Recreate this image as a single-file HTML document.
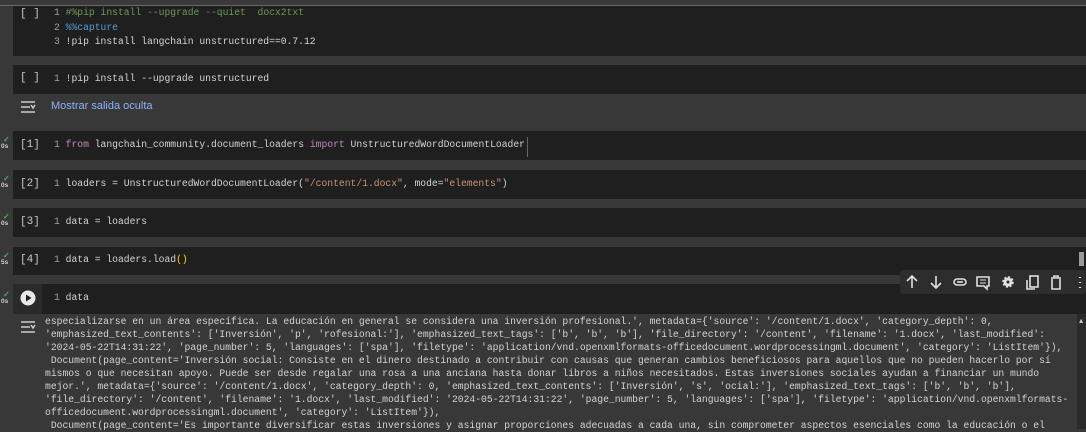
<!DOCTYPE html>
<html><head><meta charset="utf-8"><style>
body{margin:0;width:1086px;height:429px;background:#383838;overflow:hidden;position:relative;font-family:"Liberation Mono",monospace;font-size:9.7px;color:#d4d4d4}
.top{position:absolute;left:0;top:0;width:1086px;height:5px;background:#3a3a3a;border-bottom:1px solid #6a6a6a}
.cell{position:absolute;left:13px;width:1073px;background:#1f1f1f}
.ln{position:absolute;white-space:pre;line-height:12px}
.n{color:#a0a0a0}
.br{position:absolute;left:20px;color:#c8c8c8;font-size:11px;font-family:"Liberation Mono",monospace}
.g{color:#6a9955}.b{color:#569cd6}.p{color:#c586c0}.s{color:#ce9178}.y{color:#ffd700}
.chk{position:absolute;left:1px;font-family:"Liberation Sans",sans-serif;font-size:6.5px;color:#ccc;line-height:7px;font-weight:bold}
.chk i{display:block;color:#4caf50;font-style:normal;font-size:8px;padding-left:2px}
.out{position:absolute;left:45px;top:315px;width:1030px;line-height:13px;white-space:pre;color:#d4d4d4}
</style></head><body>
<div class="top"></div>
<div class="cell" style="top:6px;height:50px"></div>
<div class="br" style="top:8px">[ ]</div>
<div class="ln" style="left:54px;top:6px;line-height:14.5px"><span class="n">1</span> <span class="g">#%pip install --upgrade --quiet  docx2txt</span>
<span class="n">2</span> <span class="b">%%capture</span>
<span class="n">3</span> !pip install langchain unstructured==0.7.12</div>

<div class="cell" style="top:65px;height:29px"></div>
<div class="br" style="top:72px">[ ]</div>
<div class="ln" style="left:54px;top:73px"><span class="n">1</span> !pip install --upgrade unstructured</div>
<svg style="position:absolute;left:20px;top:100px" width="16" height="14" viewBox="0 0 16 14"><path d="M1 2h14M1 12h14M1 7h9M11 5l2 3 2-3" stroke="#ccc" stroke-width="1.5" fill="none"/></svg>
<div style="position:absolute;left:51px;top:100px;font-family:'Liberation Sans',sans-serif;font-size:11px;color:#8ab4f8">Mostrar salida oculta</div>

<div class="chk" style="top:136px"><i>✓</i>0s</div>
<div class="cell" style="top:131px;height:29px"></div>
<div class="br" style="top:139px">[1]</div>
<div class="ln" style="left:54px;top:139px"><span class="n">1</span> <span class="p">from</span> langchain_community.document_loaders <span class="p">import</span> UnstructuredWordDocumentLoader</div>
<div style="position:absolute;left:527px;top:137px;width:1px;height:20px;background:#666"></div>

<div class="chk" style="top:175px"><i>✓</i>0s</div>
<div class="cell" style="top:170px;height:29px"></div>
<div class="br" style="top:178px">[2]</div>
<div class="ln" style="left:54px;top:178px"><span class="n">1</span> loaders = UnstructuredWordDocumentLoader(<span class="s">"/content/1.docx"</span>, mode=<span class="s">"elements"</span>)</div>

<div class="chk" style="top:213px"><i>✓</i>0s</div>
<div class="cell" style="top:208px;height:29px"></div>
<div class="br" style="top:216px">[3]</div>
<div class="ln" style="left:54px;top:216px"><span class="n">1</span> data = loaders</div>

<div class="chk" style="top:252px"><i>✓</i>5s</div>
<div class="cell" style="top:247px;height:28px"></div>
<div class="br" style="top:254px">[4]</div>
<div class="ln" style="left:54px;top:254px"><span class="n">1</span> data = loaders.load<span class="y">()</span></div>
<div style="position:absolute;left:1079px;top:252px;width:5px;height:14px;background:#9a9a9a"></div>

<div class="chk" style="top:291px"><i>✓</i>0s</div>
<div class="cell" style="top:284px;height:30px"></div>
<div style="position:absolute;left:13px;top:284px;width:29px;height:30px;background:#2a2a2a"></div>
<svg style="position:absolute;left:20px;top:290px" width="16" height="16"><circle cx="8" cy="8" r="7.5" fill="#e8e8e8"/><path d="M6 4.5v7l5.5-3.5z" fill="#1f1f1f"/></svg>
<div class="ln" style="left:54px;top:292px"><span class="n">1</span> data</div>

<div style="position:absolute;left:900px;top:270px;width:186px;height:24px;background:#2d2d2d;border-radius:3px"></div>
<svg style="position:absolute;left:900px;top:270px" width="186" height="24" viewBox="0 0 186 24" fill="none" stroke="#e0e0e0" stroke-width="1.6">
<path d="M12 18V7M7 11l5-5 5 5"/><path d="M36 6v11M31 13l5 5 5-5"/>
<rect x="54" y="9" width="12" height="6" rx="3"/><path d="M57 12h6"/>
<path d="M77 7h12v9h-2v3l-3-3h-7z"/><path d="M80 10h6M80 13h6" stroke-width="1"/>
<circle cx="108" cy="12" r="4.5" fill="#e0e0e0" stroke-width="2.5" stroke-dasharray="2 1.5"/><circle cx="108" cy="12" r="1.5" fill="#2d2d2d" stroke="none"/>
<rect x="130" y="6" width="8" height="11"/><path d="M127 10v9h8"/>
<path d="M151 8h10M154 8V6h4v2M152 9v10h8V9"/>
<path d="M180 7v1M180 12v1M180 17v1" stroke-width="2.2"/>
</svg>

<svg style="position:absolute;left:20px;top:320px" width="16" height="14" viewBox="0 0 16 14"><path d="M1 2h14M1 12h14M1 7h9M11 5l2 3 2-3" stroke="#ccc" stroke-width="1.5" fill="none"/></svg>
<div class="out">especializarse en un área específica. La educación en general se considera una inversión profesional.', metadata={'source': '/content/1.docx', 'category_depth': 0,
'emphasized_text_contents': ['Inversión', 'p', 'rofesional:'], 'emphasized_text_tags': ['b', 'b', 'b'], 'file_directory': '/content', 'filename': '1.docx', 'last_modified':
'2024-05-22T14:31:22', 'page_number': 5, 'languages': ['spa'], 'filetype': 'application/vnd.openxmlformats-officedocument.wordprocessingml.document', 'category': 'ListItem'}),
 Document(page_content='Inversión social: Consiste en el dinero destinado a contribuir con causas que generan cambios beneficiosos para aquellos que no pueden hacerlo por sí
mismos o que necesitan apoyo. Puede ser desde regalar una rosa a una anciana hasta donar libros a niños necesitados. Estas inversiones sociales ayudan a financiar un mundo
mejor.', metadata={'source': '/content/1.docx', 'category_depth': 0, 'emphasized_text_contents': ['Inversión', 's', 'ocial:'], 'emphasized_text_tags': ['b', 'b', 'b'],
'file_directory': '/content', 'filename': '1.docx', 'last_modified': '2024-05-22T14:31:22', 'page_number': 5, 'languages': ['spa'], 'filetype': 'application/vnd.openxmlformats-
officedocument.wordprocessingml.document', 'category': 'ListItem'}),
 Document(page_content='Es importante diversificar estas inversiones y asignar proporciones adecuadas a cada una, sin comprometer aspectos esenciales como la educación o el</div>
<div style="position:absolute;left:1077px;top:314px;width:9px;height:115px;background:#2a2a2a"></div>
<div style="position:absolute;left:1079px;top:318px;color:#ccc;font-size:7px">▲</div>
</body></html>
